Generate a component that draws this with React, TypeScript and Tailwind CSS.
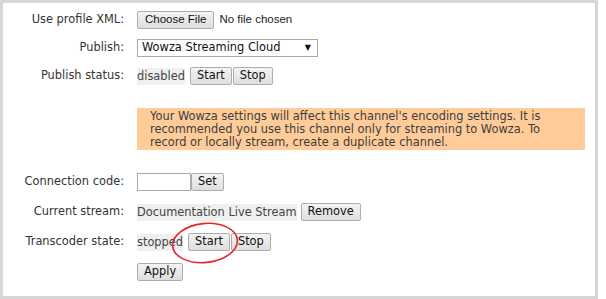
import React from "react";

const font = "font-['DejaVu_Sans','Verdana',sans-serif]";

function Btn({ children, className = "" }: { children: React.ReactNode; className?: string }) {
  return (
    <button
      className={`h-[18px] px-[6px] text-[11.4px] leading-none text-[#111] border border-[#adadad] rounded-[2px] bg-gradient-to-b from-[#f4f4f4] to-[#dedede] ${className}`}
    >
      {children}
    </button>
  );
}

function Row({
  label,
  className = "",
  children,
}: {
  label: string;
  className?: string;
  children: React.ReactNode;
}) {
  return (
    <div className={`flex items-center h-[18px] ${className}`}>
      <div className="w-[121px] text-right text-[#333] whitespace-nowrap">{label}</div>
      <div className="ml-[13px] flex items-center">{children}</div>
    </div>
  );
}

function Status({ text }: { text: string }) {
  return <span className="bg-[#efefef] text-[#444] leading-[17px]">{text}</span>;
}

export default function App() {
  return (
    <div className={`w-[606px] h-[299px] bg-white ${font} text-[11.4px]`}>
      <div className="w-[598px] h-[299px] border-[3px] border-[#d6d6d6] pt-[8px]">
        <Row label="Use profile XML:">
          <Btn className="font-['Liberation_Sans',sans-serif] text-[11.5px] px-[7px]">Choose File</Btn>
          <span className="ml-[5px] text-[#222] font-['Liberation_Sans',sans-serif] text-[11.5px]">
            No file chosen
          </span>
        </Row>

        <Row label="Publish:" className="mt-[10px]">
          <div className="w-[181px] h-[18px] border border-[#a9a9a9] flex items-center justify-between pl-[4px] pr-[6px] text-[#111]">
            <span>Wowza Streaming Cloud</span>
            <span className="text-[8px]">▼</span>
          </div>
        </Row>

        <Row label="Publish status:" className="mt-[10px]">
          <Status text="disabled" />
          <Btn className="ml-[5px]">Start</Btn>
          <Btn className="ml-[1px]">Stop</Btn>
        </Row>

        <div className="mt-[23px] ml-[134px] w-[448px] h-[42px] bg-[#ffcc99] pl-[13px] pt-[2px] text-[#3d3d3d] leading-[13px] whitespace-nowrap">
          Your Wowza settings will affect this channel's encoding settings. It is
          <br />
          recommended you use this channel only for streaming to Wowza. To
          <br />
          record or locally stream, create a duplicate channel.
        </div>

        <Row label="Connection code:" className="mt-[23px]">
          <div className="w-[54px] h-[18px] border border-[#a9a9a9] bg-white" />
          <Btn>Set</Btn>
        </Row>

        <Row label="Current stream:" className="mt-[12px]">
          <Status text="Documentation Live Stream" />
          <Btn className="ml-[4px]">Remove</Btn>
        </Row>

        <Row label="Transcoder state:" className="mt-[12px]">
          <div className="relative flex items-center">
            <Status text="stopped" />
            <Btn className="ml-[5px]">Start</Btn>
            <Btn className="ml-[1px]">Stop</Btn>
            <svg
              className="absolute left-[32px] top-[-13px] pointer-events-none"
              width="72"
              height="46"
              viewBox="0 0 72 46"
            >
              <ellipse
                cx="36"
                cy="23"
                rx="32.5"
                ry="19.5"
                transform="rotate(-6 36 23)"
                fill="none"
                stroke="#e3262a"
                strokeWidth="1.6"
              />
            </svg>
          </div>
        </Row>

        <Row label="" className="mt-[12px]">
          <Btn>Apply</Btn>
        </Row>
      </div>
    </div>
  );
}
